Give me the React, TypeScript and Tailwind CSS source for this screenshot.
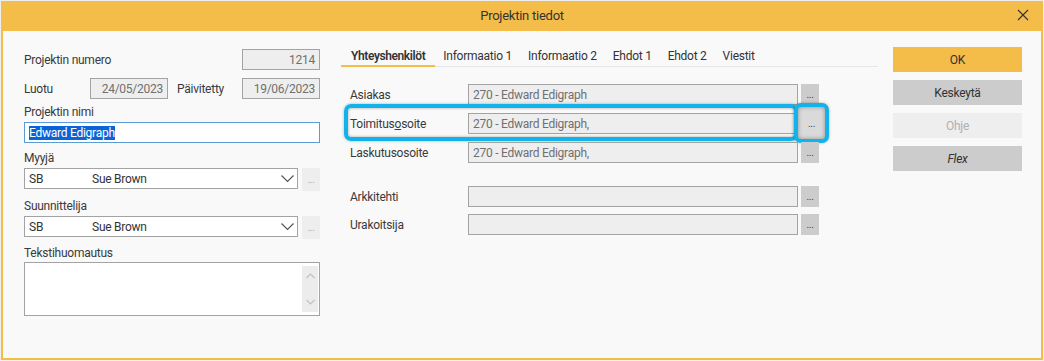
const font = { fontFamily: 'Roboto, "Liberation Sans", sans-serif' }

function Dots({ className }: { className: string }) {
  return (
    <div className={`flex items-center justify-center text-[10px] leading-none ${className}`}>
      ...
    </div>
  )
}

function Chevron() {
  return (
    <svg width="13" height="8" viewBox="0 0 13 8" className="text-[#555]">
      <polyline points="0.5,0.5 6.5,6.5 12.5,0.5" fill="none" stroke="currentColor" strokeWidth="1.2" />
    </svg>
  )
}

function ReadOnly({ value, className }: { value: string; className: string }) {
  return (
    <div
      className={`h-[21px] border border-[#a3a3a3] bg-[#eeeeee] text-[12px] text-[#707070] flex items-center px-[4px] ${className}`}
    >
      {value}
    </div>
  )
}

function PersonSelect({ label }: { label: string }) {
  return (
    <>
      <div className="mt-[7px] h-[16px] text-[12px] leading-[16px] text-[#3a3a3a]">{label}</div>
      <div className="mt-[2px] flex gap-[4px]">
        <div className="w-[275px] h-[21px] border border-[#a3a3a3] bg-white flex items-center pl-[4px] pr-[3px] text-[12px] text-[#333]">
          <span className="w-[63px]">SB</span>
          <span className="flex-1">Sue Brown</span>
          <Chevron />
        </div>
        <Dots className="w-[18px] h-[23px] bg-[#eeeeee] text-[#aaa]" />
      </div>
    </>
  )
}

function ContactRow({
  label,
  value,
  children,
}: {
  label: React.ReactNode
  value: string
  children?: React.ReactNode
}) {
  return (
    <div className="relative flex items-center h-[21px]">
      <div className="w-[127px] pl-[9px] text-[12px] text-[#3a3a3a]">{label}</div>
      <ReadOnly value={value} className="w-[330px]" />
      <Dots className="ml-[3px] w-[18px] h-[21px] bg-[#cccccc] text-[#444]" />
      {children}
    </div>
  )
}

export default function App() {
  const tabs = ['Yhteyshenkilöt', 'Informaatio 1', 'Informaatio 2', 'Ehdot 1', 'Ehdot 2', 'Viestit']
  return (
    <div className="w-[1044px] h-[361px] bg-[#efefef] pt-[1px] pl-[1px] tracking-[-0.25px]" style={font}>
      <div className="w-[1042px] h-[359px] flex flex-col">
        <div className="relative h-[30px] bg-[#f4bc49] flex items-center justify-center text-[13px] text-[#333]">
          Projektin tiedot
          <svg width="12" height="12" viewBox="0 0 12 12" className="absolute right-[14px] top-[8px] text-[#333]">
            <path d="M1 1L11 11M11 1L1 11" stroke="currentColor" strokeWidth="1.1" />
          </svg>
        </div>

        <div className="flex-1 flex bg-[#f9f9f9] border-x-2 border-b-2 border-[#f4bc49]">
          {/* left column */}
          <div className="ml-[21px] w-[296px] flex flex-col text-[12px] text-[#3a3a3a]">
            <div className="mt-[18px] flex items-center">
              <span>Projektin numero</span>
              <ReadOnly value="1214" className="ml-auto w-[78px] justify-end" />
            </div>
            <div className="mt-[8px] flex items-center">
              <span className="w-[66px]">Luotu</span>
              <ReadOnly value="24/05/2023" className="w-[78px] justify-end" />
              <span className="ml-[9px]">Päivitetty</span>
              <ReadOnly value="19/06/2023" className="ml-auto w-[78px] justify-end" />
            </div>
            <div className="mt-[5px] h-[16px] leading-[16px]">Projektin nimi</div>
            <div className="mt-[2px] h-[21px] border border-[#5b9bd5] bg-white flex items-center pl-[4px]">
              <span className="bg-[#0a64d6] text-white leading-[14px]">Edward Edigraph</span>
            </div>
            <PersonSelect label="Myyjä" />
            <PersonSelect label="Suunnittelija" />
            <div className="mt-[6px] h-[16px] leading-[16px]">Tekstihuomautus</div>
            <div className="mt-[1px] h-[54px] border border-[#a3a3a3] bg-white flex justify-end py-[3px] pr-[1px]">
              <div className="w-[16px] bg-[#ececec] flex flex-col items-center justify-between py-[7px]">
                <svg width="9" height="6" viewBox="0 0 9 6">
                  <polyline points="0.5,5 4.5,1 8.5,5" fill="none" stroke="#c2c2c2" strokeWidth="1.2" />
                </svg>
                <svg width="9" height="6" viewBox="0 0 9 6">
                  <polyline points="0.5,1 4.5,5 8.5,1" fill="none" stroke="#c2c2c2" strokeWidth="1.2" />
                </svg>
              </div>
            </div>
          </div>

          {/* middle column */}
          <div className="ml-[21px] w-[537px] flex flex-col">
            <div className="mt-[15px] flex border-b border-[#e6e6e6]">
              {tabs.map((t, i) => (
                <div
                  key={t}
                  className={`h-[21px] -mb-px px-[8px] flex items-center text-[12px] text-[#333] border-b-2 ${
                    i === 0 ? 'border-[#f4bc49] font-semibold pl-[10px] pr-[10px] tracking-[-0.4px]' : 'border-transparent'
                  }`}
                >
                  {t}
                </div>
              ))}
            </div>
            <div className="mt-[17px] flex flex-col gap-[8px]">
              <ContactRow label="Asiakas" value="270 - Edward Edigraph" />
              <ContactRow
                label={
                  <>
                    Toimitus<span className="underline">o</span>soite
                  </>
                }
                value="270 - Edward Edigraph,"
              >
                <div className="absolute left-[3px] top-[-9px] w-[454px] h-[37px] rounded-[7px] border-[4px] border-[#12b2ea] shadow-[inset_0_0_3px_rgba(0,0,0,0.35),0_0_3px_rgba(0,0,0,0.3)]" />
                <div className="absolute left-[453px] top-[-10px] w-[35px] h-[40px] rounded-[7px] border-[4px] border-[#12b2ea] bg-[#dadada] flex items-center justify-center text-[10px] text-[#444] shadow-[inset_0_0_4px_rgba(0,0,0,0.35),0_0_3px_rgba(0,0,0,0.3)]">
                  ...
                </div>
              </ContactRow>
              <ContactRow label="Laskutusosoite" value="270 - Edward Edigraph," />
              <div className="h-[8px] -mt-[1px]" />
              <ContactRow label="Arkkitehti" value="" />
              <div className="-mt-[1px]">
                <ContactRow label="Urakoitsija" value="" />
              </div>
            </div>
          </div>

          {/* right column */}
          <div className="ml-[15px] w-[129px] mt-[16px] flex flex-col gap-[8px] text-[12px]">
            <div className="h-[25px] bg-[#f4bc49] text-[#333] flex items-center justify-center">OK</div>
            <div className="h-[25px] bg-[#cccccc] text-[#333] flex items-center justify-center">Keskeytä</div>
            <div className="h-[25px] bg-[#eeeeee] text-[#b0b0b0] flex items-center justify-center">Ohje</div>
            <div className="h-[25px] bg-[#cccccc] text-[#333] italic flex items-center justify-center">Flex</div>
          </div>
        </div>
      </div>
    </div>
  )
}
